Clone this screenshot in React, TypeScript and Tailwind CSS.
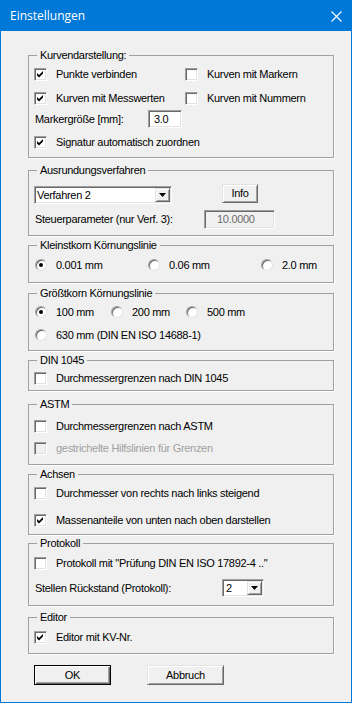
import * as React from 'react';

const sunken =
  'border border-t-[#a0a0a0] border-l-[#a0a0a0] border-r-white border-b-white shadow-[inset_1px_1px_0_#696969,inset_-1px_-1px_0_#e3e3e3]';
const raised =
  'border border-t-[#e3e3e3] border-l-[#e3e3e3] border-r-[#696969] border-b-[#696969] shadow-[inset_1px_1px_0_#fff,inset_-1px_-1px_0_#a0a0a0]';

const Check: React.FC<{ checked?: boolean; disabled?: boolean }> = ({ checked, disabled }) => (
    <span className={`w-[13px] h-[13px] shrink-0 flex items-center justify-center ${sunken} ${disabled ? 'bg-[#f0f0f0]' : 'bg-white'}`}>
        {checked && (
            <svg width="7" height="7" viewBox="0 0 7 7">
                <path d="M0 2 L2 4 L6 0 V2.6 L2 6.6 L0 4.6 Z" fill="#000" />
            </svg>
        )}
    </span>
);

const Radio: React.FC<{ checked?: boolean }> = ({ checked }) => (
    <span className="w-[12px] h-[12px] shrink-0 rounded-full bg-white flex items-center justify-center border border-[#a0a0a0] border-b-[#e3e3e3] border-r-[#e3e3e3] shadow-[inset_1px_1px_0_#696969]">
        {checked && <span className="w-[4px] h-[4px] rounded-full bg-black" />}
    </span>
);

const CheckRow: React.FC<{ label: string; checked?: boolean; disabled?: boolean; className?: string }> = ({ label, checked, disabled, className }) => (
    <div className={`flex items-center ${className ?? ''}`}>
        <Check checked={checked} disabled={disabled} />
        <span className={`ml-[9px] whitespace-nowrap ${disabled ? 'text-[#a0a0a0]' : ''}`}>{label}</span>
    </div>
);

const RadioItem: React.FC<{ label: string; checked?: boolean; className?: string }> = ({ label, checked, className }) => (
    <div className={`flex items-center ${className ?? ''}`}>
        <Radio checked={checked} />
        <span className="ml-[9px] whitespace-nowrap">{label}</span>
    </div>
);

const Group: React.FC<{ title: string; className: string; children: React.ReactNode }> = ({ title, className, children }) => (
    <fieldset className={`w-[306px] border border-[#a0a0a0] shadow-[1px_1px_0_#fff] ${className}`}>
        <legend className="ml-[8px] px-[3px] leading-[13px]">{title}</legend>
        {children}
    </fieldset>
);

const Arrow: React.FC = () => (
    <span className={`w-[15px] h-[14px] bg-[#f0f0f0] flex items-center justify-center ${raised}`}>
        <svg width="7" height="4" viewBox="0 0 7 4">
            <path d="M0 0 H7 L3.5 4 Z" fill="#000" />
        </svg>
    </span>
);

export default function App() {
    return (
        <div className="w-[352px] h-[703px] border border-[#0078d7] bg-[#f0f0f0] flex flex-col font-['Liberation_Sans',Arial,sans-serif] text-[11px] tracking-[-0.3px] text-black">
            <div className="h-[30px] bg-[#0078d7] flex items-center justify-between pl-[9px] pr-[9px] shrink-0">
                <span className="text-white text-[12px] tracking-normal font-['Open_Sans','Noto_Sans',sans-serif]">Einstellungen</span>
                <svg width="11" height="11" viewBox="0 0 11 11">
                    <path d="M0.5 0.5 L10.5 10.5 M10.5 0.5 L0.5 10.5" stroke="#fff" strokeWidth="1.1" />
                </svg>
            </div>

            <div className="flex flex-col pl-[27px]">
                <Group title="Kurvendarstellung:" className="mt-[18px] h-[109px]">
                    <div className="grid grid-cols-[151px_1fr] pl-[5px]">
                        <CheckRow label="Punkte verbinden" checked className="h-[24px]" />
                        <CheckRow label="Kurven mit Markern" className="h-[24px]" />
                        <CheckRow label="Kurven mit Messwerten" checked className="h-[24px]" />
                        <CheckRow label="Kurven mit Nummern" className="h-[24px]" />
                    </div>
                    <div className="flex items-center h-[18px] pl-[6px]">
                        <span className="w-[113px]">Markergröße [mm]:</span>
                        <span className={`w-[34px] h-[18px] bg-white pl-[5px] flex items-center ${sunken}`}>3.0</span>
                    </div>
                    <CheckRow label="Signatur automatisch zuordnen" checked className="h-[24px] mt-[2px] pl-[5px]" />
                </Group>

                <Group title="Ausrundungsverfahren" className="mt-[6px] h-[72px]">
                    <div className="flex items-start mt-[7px] pl-[5px]">
                        <div className={`mt-[2px] w-[138px] h-[18px] bg-white flex items-center justify-between pl-[2px] pr-[1px] ${sunken}`}>
                            <span>Verfahren 2</span>
                            <Arrow />
                        </div>
                        <button className={`ml-[50px] w-[36px] h-[19px] bg-[#f0f0f0] flex items-center justify-center ${raised}`}>Info</button>
                    </div>
                    <div className="flex items-center h-[19px] mt-[6px] pl-[6px]">
                        <span className="w-[169px]">Steuerparameter (nur Verf. 3):</span>
                        <span className={`w-[71px] h-[19px] bg-[#f0f0f0] text-[#6d6d6d] pl-[12px] flex items-center ${sunken}`}>10.0000</span>
                    </div>
                </Group>

                <Group title="Kleinstkorn Körnungslinie" className="mt-[3px] h-[44px]">
                    <div className="grid grid-cols-[113px_113px_1fr] h-[26px] items-center pl-[6px]">
                        <RadioItem label="0.001 mm" checked />
                        <RadioItem label="0.06 mm" />
                        <RadioItem label="2.0 mm" />
                    </div>
                </Group>

                <Group title="Größtkorn Körnungslinie" className="mt-[4px] h-[64px]">
                    <div className="grid grid-cols-[76px_75px_1fr] h-[24px] items-center pl-[6px]">
                        <RadioItem label="100 mm" checked />
                        <RadioItem label="200 mm" />
                        <RadioItem label="500 mm" />
                    </div>
                    <RadioItem label="630 mm (DIN EN ISO 14688-1)" className="h-[22px] pl-[6px]" />
                </Group>

                <Group title="DIN 1045" className="mt-[3px] h-[37px]">
                    <CheckRow label="Durchmessergrenzen nach DIN 1045" className="h-[22px] pl-[5px]" />
                </Group>

                <Group title="ASTM" className="mt-[7px] h-[67px]">
                    <CheckRow label="Durchmessergrenzen nach ASTM" className="h-[22px] mt-[4px] pl-[5px]" />
                    <CheckRow label="gestrichelte Hilfslinien für Grenzen" disabled className="h-[22px] pl-[5px]" />
                </Group>

                <Group title="Achsen" className="mt-[3px] h-[67px]">
                    <CheckRow label="Durchmesser von rechts nach links steigend" className="h-[22px] mt-[1px] pl-[5px]" />
                    <CheckRow label="Massenanteile von unten nach oben darstellen" checked className="h-[24px] mt-[4px] pl-[5px]" />
                </Group>

                <Group title="Protokoll" className="mt-[2px] h-[69px]">
                    <CheckRow label={'Protokoll mit "Prüfung DIN EN ISO 17892-4 .."'} className="h-[26px] pl-[5px]" />
                    <div className="flex items-center h-[18px] mt-[3px] pl-[6px]">
                        <span className="w-[187px]">Stellen Rückstand (Protokoll):</span>
                        <div className={`w-[42px] h-[18px] bg-white flex items-center justify-between pl-[3px] pr-[1px] ${sunken}`}>
                            <span>2</span>
                            <Arrow />
                        </div>
                    </div>
                </Group>

                <Group title="Editor" className="mt-[5px] h-[43px]">
                    <CheckRow label="Editor mit KV-Nr." checked className="h-[26px] pl-[5px]" />
                </Group>

                <div className="flex mt-[11px] pl-[6px]">
                    <button className="w-[77px] h-[20px] bg-[#f0f0f0] border border-black shadow-[inset_1px_1px_0_#fff,inset_-1px_-1px_0_#696969,inset_-2px_-2px_0_#a0a0a0] flex items-center justify-center">OK</button>
                    <button className={`ml-[36px] w-[77px] h-[20px] bg-[#f0f0f0] flex items-center justify-center ${raised}`}>Abbruch</button>
                </div>
            </div>
        </div>
    );
}
